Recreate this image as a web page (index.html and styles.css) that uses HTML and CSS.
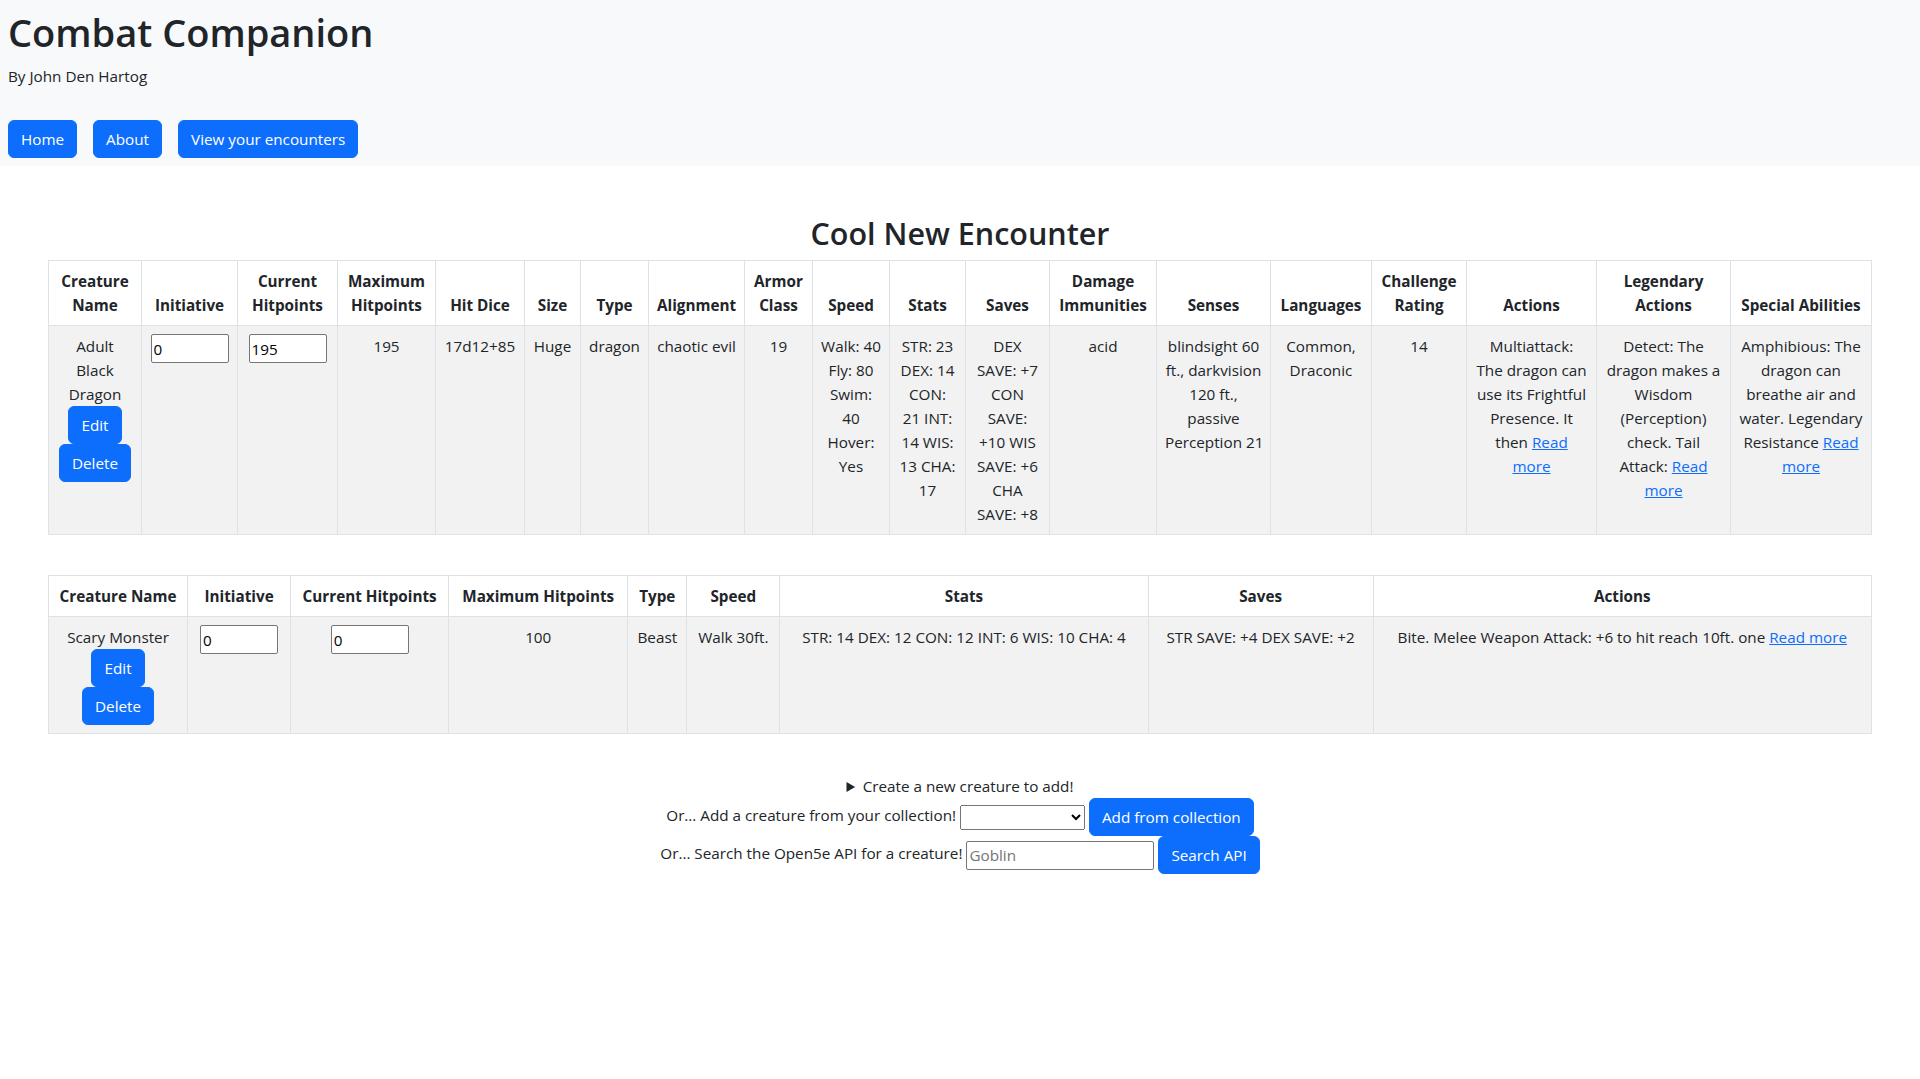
FILE: index.html
```html
<!DOCTYPE html>
<html lang="en">
<head>
<meta charset="utf-8">
<title>Combat Companion</title>
<link rel="stylesheet" href="styles.css">
</head>
<body>
<header class="site-header">
  <h1 class="site-title">Combat Companion</h1>
  <p class="byline">By John Den Hartog</p>
  <nav class="nav">
    <a class="btn" href="#">Home</a>
    <a class="btn" href="#">About</a>
    <a class="btn" href="#">View your encounters</a>
  </nav>
</header>
<main class="main">
  <h2 class="encounter-title">Cool New Encounter</h2>
  <table class="creature-table">
    <colgroup>
      <col class="c93"><col class="c96"><col class="c100"><col class="c98"><col class="c89">
      <col class="c56"><col class="c68"><col class="c96"><col class="c68"><col class="c77">
      <col class="c76"><col class="c84"><col class="c107"><col class="c114"><col class="c101">
      <col class="c95"><col class="c130"><col class="c134"><col class="c141">
    </colgroup>
    <thead>
      <tr>
        <th>Creature<br>Name</th>
        <th>Initiative</th>
        <th>Current<br>Hitpoints</th>
        <th>Maximum<br>Hitpoints</th>
        <th>Hit Dice</th>
        <th>Size</th>
        <th>Type</th>
        <th>Alignment</th>
        <th>Armor<br>Class</th>
        <th>Speed</th>
        <th>Stats</th>
        <th>Saves</th>
        <th>Damage<br>Immunities</th>
        <th>Senses</th>
        <th>Languages</th>
        <th>Challenge<br>Rating</th>
        <th>Actions</th>
        <th>Legendary<br>Actions</th>
        <th>Special Abilities</th>
      </tr>
    </thead>
    <tbody>
      <tr>
        <td>Adult<br>Black<br>Dragon<br><button class="btn" type="button">Edit</button><br><button class="btn" type="button">Delete</button></td>
        <td><input class="cell-input" type="text" value="0"></td>
        <td><input class="cell-input" type="text" value="195"></td>
        <td>195</td>
        <td>17d12+85</td>
        <td>Huge</td>
        <td>dragon</td>
        <td>chaotic evil</td>
        <td>19</td>
        <td>Walk: 40<br>Fly: 80<br>Swim:<br>40<br>Hover:<br>Yes</td>
        <td>STR: 23<br>DEX: 14<br>CON:<br>21 INT:<br>14 WIS:<br>13 CHA:<br>17</td>
        <td>DEX<br>SAVE: +7<br>CON<br>SAVE:<br>+10 WIS<br>SAVE: +6<br>CHA<br>SAVE: +8</td>
        <td>acid</td>
        <td>blindsight 60<br>ft., darkvision<br>120 ft.,<br>passive<br>Perception 21</td>
        <td>Common,<br>Draconic</td>
        <td>14</td>
        <td>Multiattack:<br>The dragon can<br>use its Frightful<br>Presence. It<br>then <a href="#">Read<br>more</a></td>
        <td>Detect: The<br>dragon makes a<br>Wisdom<br>(Perception)<br>check. Tail<br>Attack: <a href="#">Read<br>more</a></td>
        <td>Amphibious: The<br>dragon can<br>breathe air and<br>water. Legendary<br>Resistance <a href="#">Read<br>more</a></td>
      </tr>
    </tbody>
  </table>
  <br>
  <table class="creature-table">
    <colgroup>
      <col class="c139"><col class="c103"><col class="c158"><col class="c179"><col class="c59">
      <col class="c93b"><col class="c368"><col class="c225"><col class="c498">
    </colgroup>
    <thead>
      <tr>
        <th>Creature Name</th>
        <th>Initiative</th>
        <th>Current Hitpoints</th>
        <th>Maximum Hitpoints</th>
        <th>Type</th>
        <th>Speed</th>
        <th>Stats</th>
        <th>Saves</th>
        <th>Actions</th>
      </tr>
    </thead>
    <tbody>
      <tr>
        <td>Scary Monster<br><button class="btn" type="button">Edit</button><br><button class="btn" type="button">Delete</button></td>
        <td><input class="cell-input" type="text" value="0"></td>
        <td><input class="cell-input" type="text" value="0"></td>
        <td>100</td>
        <td>Beast</td>
        <td>Walk 30ft.</td>
        <td>STR: 14 DEX: 12 CON: 12 INT: 6 WIS: 10 CHA: 4</td>
        <td>STR SAVE: +4 DEX SAVE: +2</td>
        <td>Bite. Melee Weapon Attack: +6 to hit reach 10ft. one <a href="#">Read more</a></td>
      </tr>
    </tbody>
  </table>
  <br>
  <details class="create">
    <summary>Create a new creature to add!</summary>
  </details>
  <form class="add-line">Or... Add a creature from your collection! <select class="collection-select"><option value=""></option></select> <button class="btn" type="button">Add from collection</button></form>
  <form class="add-line">Or... Search the Open5e API for a creature! <input class="search-input" type="text" placeholder="Goblin"> <button class="btn" type="button">Search API</button></form>
</main>
</body>
</html>
```

FILE: styles.css
```css
html, body {
  margin: 0;
  padding: 0;
  background: #ffffff;
}

body {
  font-family: "Open Sans", "Noto Sans", sans-serif;
  font-size: 15.25px;
  line-height: 24px;
  color: #212529;
}

.site-header {
  background: #f8f9fa;
  padding: 8px 8px 8px 8px;
}

.site-title {
  margin: 0 0 8px;
  font-size: 38px;
  line-height: 48px;
  font-weight: 600;
}

.byline {
  margin: 0 0 16px;
}

.nav {
  display: flex;
  gap: 16px;
  padding-top: 16px;
}

.btn {
  display: inline-block;
  padding: 6px 12px;
  font-family: inherit;
  font-size: 15.25px;
  line-height: 24px;
  font-weight: 400;
  color: #ffffff;
  background: #0d6efd;
  border: 1px solid #0d6efd;
  border-radius: 6px;
  text-decoration: none;
  text-align: center;
  vertical-align: middle;
  cursor: pointer;
  margin: 0;
}

.main {
  padding: 48px 48px 0;
}

.encounter-title {
  margin: 0 0 8px;
  font-size: 30.5px;
  line-height: 38.4px;
  font-weight: 600;
  text-align: center;
}

.creature-table {
  width: 100%;
  border-collapse: collapse;
  table-layout: fixed;
  margin-bottom: 16px;
  text-align: center;
}

.creature-table th,
.creature-table td {
  padding: 8px;
  border: 1px solid #dee2e6;
  white-space: nowrap;
}

.creature-table th {
  vertical-align: bottom;
  background: #ffffff;
  font-weight: 700;
}

.creature-table td {
  vertical-align: top;
  background: #f2f2f2;
}

.creature-table a,
.add-line a {
  color: #0d6efd;
  text-decoration: underline;
}

.cell-input {
  box-sizing: border-box;
  width: 78px;
  height: 29px;
  padding: 1px 2px;
  margin: 0;
  font-family: inherit;
  font-size: inherit;
  line-height: 24px;
  color: #000000;
  background: #ffffff;
  border: 1px solid #767676;
  border-radius: 2px;
  vertical-align: top;
}

.create {
  text-align: center;
}

.create summary {
  cursor: pointer;
}

.add-line {
  margin: 0;
  text-align: center;
}

.collection-select {
  box-sizing: border-box;
  width: 125px;
  height: 25px;
  margin: 0;
  font-family: inherit;
  font-size: 13.33px;
  vertical-align: middle;
}

.search-input {
  box-sizing: border-box;
  width: 188px;
  height: 29px;
  padding: 1px 2px;
  margin: 0;
  font-family: inherit;
  font-size: inherit;
  line-height: 24px;
  color: #000000;
  background: #ffffff;
  border: 1px solid #767676;
  border-radius: 2px;
  vertical-align: middle;
}

.search-input::placeholder {
  color: #757575;
}

/* first table column widths */
.c93 { width: 93px; }
.c96 { width: 96px; }
.c100 { width: 100px; }
.c98 { width: 98px; }
.c89 { width: 89px; }
.c56 { width: 56px; }
.c68 { width: 68px; }
.c77 { width: 77px; }
.c76 { width: 76px; }
.c84 { width: 84px; }
.c107 { width: 107px; }
.c114 { width: 114px; }
.c101 { width: 101px; }
.c95 { width: 95px; }
.c130 { width: 130px; }
.c134 { width: 134px; }
.c141 { width: 141px; }

/* second table column widths */
.c139 { width: 139px; }
.c103 { width: 103px; }
.c158 { width: 158px; }
.c179 { width: 179px; }
.c59 { width: 59px; }
.c93b { width: 93px; }
.c368 { width: 368px; }
.c225 { width: 225px; }
.c498 { width: 498px; }
```
